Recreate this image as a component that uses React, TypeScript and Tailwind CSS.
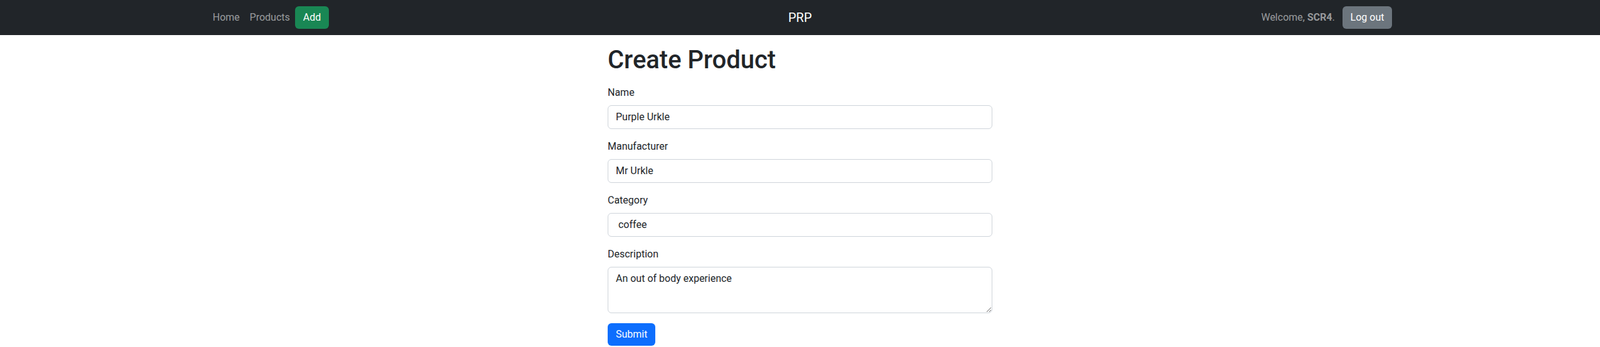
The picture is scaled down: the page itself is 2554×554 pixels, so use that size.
import React from 'react';

const fields = [
  { id: 'name', label: 'Name', value: 'Purple Urkle' },
  { id: 'manufacturer', label: 'Manufacturer', value: 'Mr Urkle' },
  { id: 'category', label: 'Category', value: ' coffee' },
];

const inputClass =
  'block w-full rounded-md border border-[#ced4da] bg-white px-3 py-1.5 text-base leading-6 text-[#212529] outline-none';

export default function App() {
  return (
    <div className="min-h-screen bg-white font-['Roboto','Liberation_Sans',sans-serif] text-base leading-6 text-[#212529]">
      <nav className="h-14 bg-[#212529]">
        <div className="mx-auto grid h-full w-[1891px] grid-cols-3 items-center">
          <div className="flex items-center">
            <a className="px-2 py-2 text-[rgba(255,255,255,0.55)]">Home</a>
            <a className="px-2 py-2 text-[rgba(255,255,255,0.55)]">Products</a>
            <button className="rounded-md bg-[#198754] px-[13px] py-1.5 leading-6 text-white">Add</button>
          </div>
          <div className="flex justify-center">
            <a className="text-xl leading-[30px] text-white">PRP</a>
          </div>
          <div className="flex items-center justify-end">
            <span className="mr-[12px] text-[rgba(255,255,255,0.55)]">
              Welcome, <b className="font-bold">SCR4</b>.
            </span>
            <button className="rounded-md bg-[#6c757d] px-[13px] py-1.5 leading-6 text-white">Log out</button>
          </div>
        </div>
      </nav>

      <main className="mx-auto w-[614px] pt-4">
        <h1 className="mb-4 text-[40px] font-medium leading-[48px]">Create Product</h1>
        <form onSubmit={(e) => e.preventDefault()}>
          {fields.map((f) => (
            <div key={f.id} className="mb-4">
              <label htmlFor={f.id} className="mb-2 block">
                {f.label}
              </label>
              <input id={f.id} type="text" defaultValue={f.value} className={inputClass} />
            </div>
          ))}
          <div className="mb-4">
            <label htmlFor="description" className="mb-2 block">
              Description
            </label>
            <textarea
              id="description"
              defaultValue="An out of body experience"
              className={`${inputClass} h-[74px] resize-y`}
            />
          </div>
          <button type="submit" className="rounded-md bg-[#0d6efd] px-[13px] py-1.5 leading-6 text-white">
            Submit
          </button>
        </form>
      </main>
    </div>
  );
}
